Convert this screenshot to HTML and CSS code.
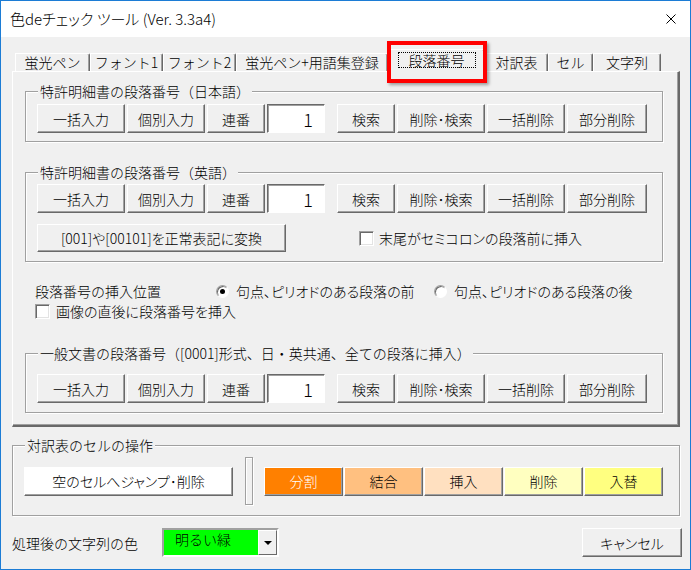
FILE: index.html
```html
<!DOCTYPE html>
<html lang="ja">

<head>
    <meta charset="UTF-8">
    <meta name="viewport" content="width=device-width, initial-scale=1.0">
    <title>色deチェック ツール</title>
    <link rel="stylesheet" href="styles.css">
</head>

<body>
    <div class="window">
        <div class="titlebar">
            <span class="title">色deチェック ツール (Ver. 3.3a4)</span>
            <svg class="close" viewBox="0 0 10 10" width="10" height="10">
                <path d="M0.5 0.5 L9.5 9.5 M9.5 0.5 L0.5 9.5" stroke="#000" stroke-width="1" fill="none" />
            </svg>
        </div>

        <div class="client">
            <div class="tabs">
                <div class="tab">蛍光ペン</div>
                <div class="tab">フォント1</div>
                <div class="tab">フォント2</div>
                <div class="tab">蛍光ペン+用語集登録</div>
                <div class="tab active"><span class="focus">段落番号</span></div>
                <div class="tab">対訳表</div>
                <div class="tab">セル</div>
                <div class="tab">文字列</div>
                <div class="mark"></div>
            </div>

            <div class="page">
                <div class="group jp">
                    <span class="group-title">特許明細書の段落番号（日本語）</span>
                    <div class="row">
                        <button class="btn wide">一括入力</button>
                        <button class="btn mid">個別入力</button>
                        <button class="btn narrow">連番</button>
                        <input class="number" value="1">
                        <button class="btn narrow after-input">検索</button>
                        <button class="btn wide">削除･検索</button>
                        <button class="btn mid">一括削除</button>
                        <button class="btn last">部分削除</button>
                    </div>
                </div>

                <div class="group en">
                    <span class="group-title">特許明細書の段落番号（英語）</span>
                    <div class="row">
                        <button class="btn wide">一括入力</button>
                        <button class="btn mid">個別入力</button>
                        <button class="btn narrow">連番</button>
                        <input class="number" value="1">
                        <button class="btn narrow after-input">検索</button>
                        <button class="btn wide">削除･検索</button>
                        <button class="btn mid">一括削除</button>
                        <button class="btn last">部分削除</button>
                    </div>
                    <div class="row-convert">
                        <button class="btn convert">[001]や[00101]を正常表記に変換</button>
                        <label class="check semicolon"><span class="box"></span>末尾がセミコロンの段落前に挿入</label>
                    </div>
                </div>

                <div class="options">
                    <span class="options-label">段落番号の挿入位置</span>
                    <label class="option"><span class="radio on"></span>句点、ピリオドのある段落の前</label>
                    <label class="option"><span class="radio"></span>句点、ピリオドのある段落の後</label>
                </div>
                <label class="check image-check"><span class="box"></span>画像の直後に段落番号を挿入</label>

                <div class="group general">
                    <span class="group-title">一般文書の段落番号（[0001]形式、日・英共通、全ての段落に挿入）</span>
                    <div class="row">
                        <button class="btn wide">一括入力</button>
                        <button class="btn mid">個別入力</button>
                        <button class="btn narrow">連番</button>
                        <input class="number" value="1">
                        <button class="btn narrow after-input">検索</button>
                        <button class="btn wide">削除･検索</button>
                        <button class="btn mid">一括削除</button>
                        <button class="btn last">部分削除</button>
                    </div>
                </div>
            </div>

            <div class="group cells">
                <span class="group-title">対訳表のセルの操作</span>
                <button class="btn jump">空のセルへジャンプ･削除</button>
                <div class="separator"></div>
                <div class="cell-actions">
                    <button class="btn cell split">分割</button>
                    <button class="btn cell merge">結合</button>
                    <button class="btn cell insert">挿入</button>
                    <button class="btn cell delete">削除</button>
                    <button class="btn cell swap">入替</button>
                </div>
            </div>

            <div class="footer">
                <span class="footer-label">処理後の文字列の色</span>
                <div class="combo">
                    <span class="combo-value">明るい緑</span>
                    <span class="combo-arrow"><span class="triangle"></span></span>
                </div>
                <button class="btn cancel">キャンセル</button>
            </div>
        </div>
    </div>
</body>

</html>
```

FILE: styles.css
```css
* {
    box-sizing: border-box;
}

body {
    margin: 0;
    font-family: "Noto Sans CJK JP", "Noto Sans", sans-serif;
    font-size: 14px;
    font-weight: 300;
    color: #000;
    background: #fff;
}

.window {
    display: flex;
    flex-direction: column;
    width: 691px;
    height: 570px;
    border: 1px solid #1c7cd5;
    background: #f0f0f0;
}

.titlebar {
    display: flex;
    align-items: center;
    height: 36px;
    padding: 0 14px 0 9px;
    background: #fff;
}

.title {
    flex: 1;
    line-height: 16px;
    font-size: 15px;
    font-feature-settings: "palt";
}

.client {
    flex: 1;
    padding: 12px 0 0 11px;
}

/* tabs */
.tabs {
    position: relative;
    display: flex;
    align-items: flex-end;
    height: 22px;
    margin-left: 3px;
}

.tab {
    height: 18px;
    border-style: solid;
    border-width: 1px 1px 0 1px;
    border-color: #fff #696969 transparent #fff;
    border-top-right-radius: 2px;
    box-shadow: inset -1px 0 0 #a0a0a0;
    line-height: 16px;
    text-align: center;
    white-space: nowrap;
}

.tab:nth-child(1) { width: 75px; }
.tab:nth-child(2) { width: 73px; }
.tab:nth-child(3) { width: 73px; }
.tab:nth-child(4) { width: 152px; }
.tab:nth-child(5) { width: 97px; }
.tab:nth-child(6) { width: 63px; }
.tab:nth-child(7) { width: 45px; }
.tab:nth-child(8) { width: 68px; }

.tab.active {
    position: relative;
    z-index: 1;
    display: flex;
    justify-content: center;
    height: 23px;
    margin-bottom: -1px;
    padding-top: 2px;
    background: #f0f0f0;
}

.focus {
    height: 16px;
    padding: 0 10px;
    border: 1px dotted #000;
    line-height: 14px;
}

.mark {
    position: absolute;
    z-index: 2;
    left: 372px;
    top: -8px;
    width: 100px;
    height: 42px;
    border: 4px solid #f00;
    box-shadow: 2px 2px 3px rgba(0, 0, 0, 0.35);
}

.page {
    width: 668px;
    height: 356px;
    padding: 19px 0 0 12px;
    border-style: solid;
    border-width: 1px 2px 2px 1px;
    border-color: #fff #696969 #696969 #fff;
    box-shadow: inset -1px -1px 0 #a0a0a0;
}

/* group frames */
.group {
    position: relative;
    border: 1px solid #a0a0a0;
    box-shadow: inset 1px 1px 0 #fff, 1px 1px 0 #fff;
}

.group-title {
    position: absolute;
    top: -9px;
    left: 12px;
    padding: 0 2px;
    background: #f0f0f0;
    line-height: 16px;
    white-space: nowrap;
}

.jp,
.en,
.general {
    width: 638px;
    padding-left: 11px;
}

.jp {
    padding-top: 12px;
    padding-bottom: 8px;
}

.en {
    margin-top: 30px;
    padding-top: 11px;
    padding-bottom: 9px;
}

.general {
    margin-top: 34px;
    padding-top: 20px;
    padding-bottom: 9px;
}

.row {
    display: flex;
    gap: 2px;
}

/* buttons */
.btn {
    height: 29px;
    padding: 0;
    border: 1px solid;
    border-color: #fff #696969 #696969 #fff;
    box-shadow: inset -1px -1px 0 #a0a0a0;
    background: #f0f0f0;
    font-family: inherit;
    font-size: 14px;
    font-weight: 300;
    line-height: 16px;
    color: #000;
    white-space: nowrap;
    font-feature-settings: "palt";
}

.wide { width: 88px; }
.mid { width: 78px; }
.narrow { width: 58px; }
.last { width: 80px; }

.after-input {
    margin-left: 10px;
}

.number {
    width: 58px;
    height: 29px;
    padding: 0 11px 0 0;
    border: 1px solid;
    border-color: #696969 #fff #fff #696969;
    box-shadow: inset 1px 1px 0 #a0a0a0;
    background: #fff;
    font-family: inherit;
    font-size: 18px;
    font-weight: 300;
    text-align: right;
    outline: none;
}

.row-convert {
    display: flex;
    align-items: center;
    margin-top: 11px;
}

.convert {
    width: 249px;
    height: 28px;
}

/* checkbox and radio */
.check,
.option {
    display: flex;
    align-items: center;
    line-height: 16px;
    white-space: nowrap;
    font-feature-settings: "palt";
}

.semicolon {
    gap: 5px;
    margin-left: 73px;
}

.box {
    width: 15px;
    height: 15px;
    border: 1px solid;
    border-color: #a0a0a0 #fff #fff #a0a0a0;
    box-shadow: inset 1px 1px 0 #696969, inset -1px -1px 0 #e3e3e3;
    background: #fff;
}

.options {
    display: flex;
    align-items: center;
    margin: 21px 0 0 10px;
    line-height: 16px;
    white-space: nowrap;
}

.options-label {
    width: 181px;
}

.option {
    gap: 7px;
    width: 218px;
}

.radio {
    position: relative;
    width: 13px;
    height: 13px;
    border: 1px solid;
    border-color: #a0a0a0 #fff #fff #a0a0a0;
    border-radius: 50%;
    box-shadow: inset 1px 1px 0 #696969;
    background: #fff;
}

.radio.on::after {
    content: '';
    position: absolute;
    left: 3px;
    top: 3px;
    width: 5px;
    height: 5px;
    border-radius: 50%;
    background: #000;
}

.image-check {
    gap: 6px;
    margin: 4px 0 0 10px;
}

/* cell operations */
.cells {
    display: flex;
    align-items: center;
    width: 668px;
    margin-top: 18px;
    padding: 11px 0 10px 11px;
}

.jump {
    width: 209px;
    background: #fff;
}

.separator {
    width: 8px;
    height: 48px;
    margin: 0 11px 0 12px;
    border: 1px solid #a0a0a0;
    box-shadow: inset 1px 1px 0 #fff, 1px 1px 0 #fff;
}

.cell-actions {
    display: flex;
    gap: 1px;
}

.cell { width: 79px; }
.split { background: #ff8000; color: #fff; }
.merge { background: #ffc080; }
.insert { background: #ffe0c0; }
.delete { background: #ffffc0; }
.swap { background: #ffff80; }

/* footer */
.footer {
    display: flex;
    align-items: center;
    margin-top: 12px;
    padding-right: 8px;
}

.footer-label {
    width: 150px;
    line-height: 16px;
}

.combo {
    display: flex;
    width: 117px;
    height: 29px;
    border: 2px solid;
    border-color: #a0a0a0 #fff #fff #a0a0a0;
}

.combo-value {
    flex: 1;
    padding: 1px 0 0 11px;
    background: #00ff00;
    line-height: 16px;
}

.combo-arrow {
    display: flex;
    align-items: center;
    justify-content: center;
    width: 19px;
    border: 1px solid;
    border-color: #fff #696969 #696969 #fff;
    background: #f0f0f0;
}

.triangle {
    border-left: 4px solid transparent;
    border-right: 4px solid transparent;
    border-top: 4px solid #000;
}

.cancel {
    width: 100px;
    margin-left: auto;
}
```
